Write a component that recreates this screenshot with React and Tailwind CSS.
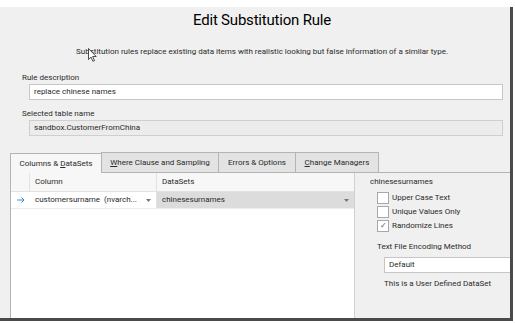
import React from "react";

const font = { fontFamily: "Roboto, 'Noto Sans', sans-serif" };

const Tab = ({ children, active, w }) => (
  <div
    className={
      "h-full flex items-center justify-center border border-b-0 border-[#b4b4b4] -ml-px first:ml-0 " +
      w +
      (active ? " bg-[#f7f7f7] relative z-10 h-[21px] -mb-px" : " bg-[#e3e3e3]")
    }
  >
    {children}
  </div>
);

const Check = ({ label, checked }) => (
  <div className="flex items-center h-[14px]">
    <div className="w-[12px] h-[12px] border border-[#a8a8a8] bg-white flex items-center justify-center text-[8px] leading-none text-[#555]">
      {checked ? "✓" : null}
    </div>
    <span className="ml-[3px]">{label}</span>
  </div>
);

const Caret = () => (
  <svg width="5" height="3" viewBox="0 0 5 3" className="shrink-0">
    <path d="M0 0h5L2.5 3z" fill="#777" />
  </svg>
);

export default function App() {
  return (
    <div className="w-[515px] h-[323px] bg-white overflow-hidden relative" style={font}>
      <div className="mt-[7px] w-[513px] h-[314px] bg-[#f0f0f0] border-r-[3px] border-b-[3px] border-[#4a4a4a] flex flex-col text-[8px] text-[#2a2a2a]">
        {/* title */}
        <div className="h-[26px] flex items-center justify-center text-[15px] tracking-[-0.2px] text-black pl-[14px]">
          Edit Substitution Rule
        </div>
        <div className="h-[14px] mt-[12px] flex items-center justify-center pl-[14px]">
          Substitution rules replace existing data items with realistic looking but false information of a similar type.
        </div>

        {/* rule description */}
        <div className="h-[12px] mt-[13px] flex items-center pl-[22px]">Rule description</div>
        <div className="h-[16px] ml-[29px] mr-[7px] bg-white border border-[#c6c6c6] flex items-center pl-[4px]">
          replace chinese names
        </div>

        <div className="h-[12px] mt-[8px] flex items-center pl-[22px]">Selected table name</div>
        <div className="h-[16px] ml-[29px] mr-[7px] bg-[#ececec] border border-[#cfcfcf] flex items-center pl-[4px]">
          sandbox.CustomerFromChina
        </div>

        {/* tabs */}
        <div className="h-[20px] mt-[16px] ml-[10px] flex items-end">
          <Tab active w="w-[92px]">
            Columns &amp; <span className="underline ml-[2px]">D</span>ataSets
          </Tab>
          <Tab w="w-[118px] h-[19px]">
            <span className="underline">W</span>here Clause and Sampling
          </Tab>
          <Tab w="w-[78px] h-[19px]">Errors &amp; Options</Tab>
          <Tab w="w-[84px] h-[19px]">
            <span className="underline">C</span>hange Managers
          </Tab>
        </div>

        {/* panel */}
        <div className="flex-1 ml-[10px] flex border-l border-t border-[#b4b4b4] min-h-0">
          <div className="w-[344px] bg-white border-r border-[#d0d0d0] flex flex-col">
            <div className="h-[19px] flex bg-[#f7f7f7] border-b border-[#e2e2e2]">
              <div className="w-[19px] border-r border-[#e2e2e2]" />
              <div className="w-[127px] flex items-center pl-[5px] border-r border-[#e2e2e2]">Column</div>
              <div className="flex-1 flex items-center pl-[5px]">DataSets</div>
            </div>
            <div className="h-[17px] flex border-b border-[#ececec]">
              <div className="w-[19px] flex items-center justify-center">
                <svg width="8" height="6" viewBox="0 0 8 6">
                  <path d="M0 3h7M4.5 0.5L7 3 4.5 5.5" stroke="#3a8ee0" strokeWidth="1" fill="none" />
                </svg>
              </div>
              <div className="w-[127px] flex items-center pl-[5px] pr-[5px] border-r border-[#e2e2e2] bg-white">
                <span className="flex-1 whitespace-nowrap">customersurname&nbsp; (nvarch...</span>
                <Caret />
              </div>
              <div className="flex-1 flex items-center pl-[5px] pr-[5px] bg-[#dcdcdc]">
                <span className="flex-1">chinesesurnames</span>
                <Caret />
              </div>
            </div>
          </div>

          <div className="flex-1 flex flex-col">
            <div className="h-[18px] flex items-center pl-[15px]">chinesesurnames</div>
            <div className="pl-[22px] flex flex-col">
              <Check label="Upper Case Text" />
              <Check label="Unique Values Only" />
              <Check label="Randomize Lines" checked />
            </div>
            <div className="h-[12px] mt-[8px] pl-[22px] flex items-center">Text File Encoding Method</div>
            <div className="h-[16px] mt-[4px] ml-[29px] bg-white border border-r-0 border-[#c6c6c6] flex items-center pl-[4px]">
              Default
            </div>
            <div className="h-[12px] mt-[5px] pl-[29px] flex items-center">This is a User Defined DataSet</div>
          </div>
        </div>
      </div>

      {/* mouse cursor */}
      <svg className="absolute left-[88px] top-[48px]" width="9" height="14" viewBox="0 0 9 14">
        <path d="M0.5 0.5v11l2.6-2.4 1.8 4.2 1.6-0.7-1.8-4.1h3.5z" fill="white" stroke="#222" strokeWidth="0.8" />
      </svg>
    </div>
  );
}
